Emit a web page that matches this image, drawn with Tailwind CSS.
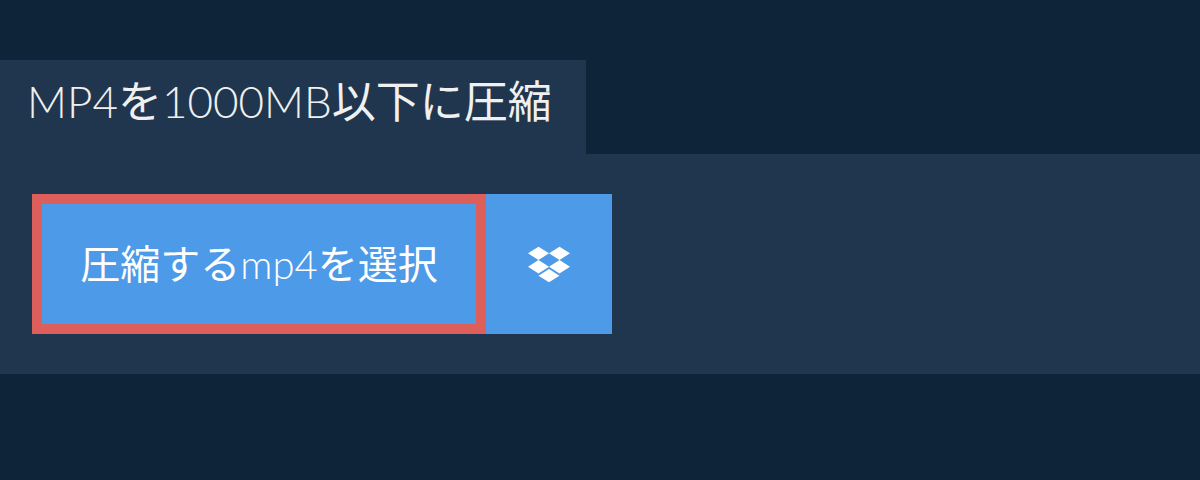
<!DOCTYPE html>
<html lang="ja">
<head>
<meta charset="utf-8">
<script src="https://cdn.jsdelivr.net/npm/@tailwindcss/browser@4"></script>
</head>
<body class="bg-[#0e2539] h-[480px] overflow-hidden font-['Lato','Noto_Sans_CJK_JP',sans-serif]">
<div class="pt-[60px]">
  <h1 class="w-[586px] h-[94px] bg-[#20364e] pl-[27px] pt-[16px] text-[#f0f0f0] text-[44px] leading-[50px] font-normal"><span class="font-light">MP4</span>を<span class="font-light">1000MB</span>以下に圧縮</h1>
  <div class="bg-[#20364e] h-[220px] p-10 pl-8 flex">
    <button class="h-[140px] w-[454px] bg-[#4d9ae8] border-[10px] border-[#dd5f5c] text-white text-[40px] font-normal flex items-center justify-center">圧縮する<span class="font-light">mp4</span>を選択</button>
    <button class="h-[140px] w-[126px] bg-[#4d9ae8] flex items-center justify-center">
      <svg class="w-[42px] h-[41px]" viewBox="0 0 528 512" fill="#fff"><path d="M132 32 L264 116 L132 200 L0 116 Z M396 32 L528 116 L396 200 L264 116 Z M132 200 L264 284 L132 369 L0 284 Z M396 200 L528 284 L396 369 L264 284 Z M264 312 L396 396 L264 480 L132 396 Z"/></svg>
    </button>
  </div>
</div>
</body>
</html>
